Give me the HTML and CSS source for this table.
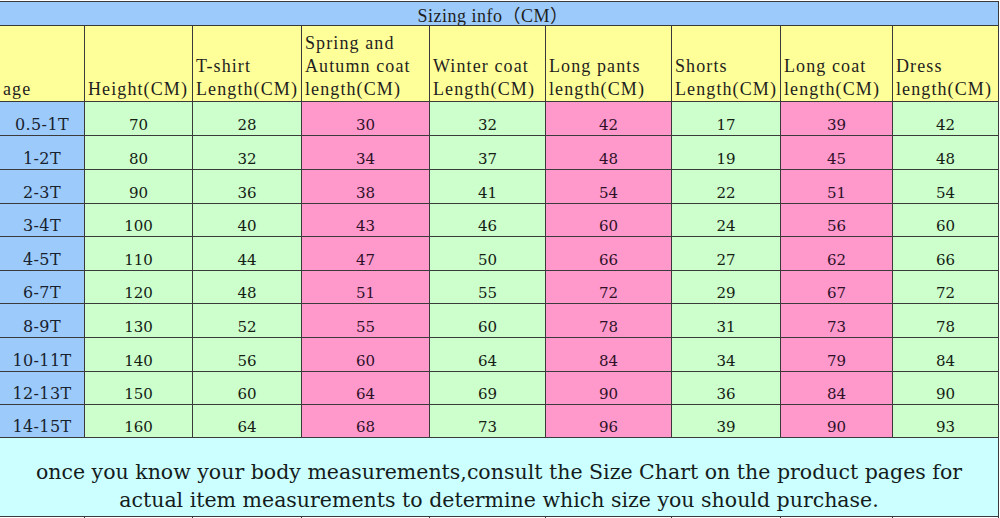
FILE: index.html
```html
<!DOCTYPE html>
<html>
<head>
<meta charset="utf-8">
<link rel="stylesheet" href="styles.css">
</head>
<body>
<div class="chart">
  <div class="title">Sizing info（CM）</div>

  <div class="hd">age</div>
  <div class="hd">Height(CM)</div>
  <div class="hd">T-shirt<br>Length(CM)</div>
  <div class="hd">Spring and<br>Autumn coat<br>length(CM)</div>
  <div class="hd">Winter coat<br>Length(CM)</div>
  <div class="hd">Long pants<br>length(CM)</div>
  <div class="hd">Shorts<br>Length(CM)</div>
  <div class="hd">Long coat<br>length(CM)</div>
  <div class="hd">Dress<br>length(CM)</div>

  <div class="c age">0.5-1T</div><div class="c g">70</div><div class="c g">28</div><div class="c p">30</div><div class="c g">32</div><div class="c p">42</div><div class="c g">17</div><div class="c p">39</div><div class="c g">42</div>
  <div class="c age">1-2T</div><div class="c g">80</div><div class="c g">32</div><div class="c p">34</div><div class="c g">37</div><div class="c p">48</div><div class="c g">19</div><div class="c p">45</div><div class="c g">48</div>
  <div class="c age">2-3T</div><div class="c g">90</div><div class="c g">36</div><div class="c p">38</div><div class="c g">41</div><div class="c p">54</div><div class="c g">22</div><div class="c p">51</div><div class="c g">54</div>
  <div class="c age">3-4T</div><div class="c g">100</div><div class="c g">40</div><div class="c p">43</div><div class="c g">46</div><div class="c p">60</div><div class="c g">24</div><div class="c p">56</div><div class="c g">60</div>
  <div class="c age">4-5T</div><div class="c g">110</div><div class="c g">44</div><div class="c p">47</div><div class="c g">50</div><div class="c p">66</div><div class="c g">27</div><div class="c p">62</div><div class="c g">66</div>
  <div class="c age">6-7T</div><div class="c g">120</div><div class="c g">48</div><div class="c p">51</div><div class="c g">55</div><div class="c p">72</div><div class="c g">29</div><div class="c p">67</div><div class="c g">72</div>
  <div class="c age">8-9T</div><div class="c g">130</div><div class="c g">52</div><div class="c p">55</div><div class="c g">60</div><div class="c p">78</div><div class="c g">31</div><div class="c p">73</div><div class="c g">78</div>
  <div class="c age">10-11T</div><div class="c g">140</div><div class="c g">56</div><div class="c p">60</div><div class="c g">64</div><div class="c p">84</div><div class="c g">34</div><div class="c p">79</div><div class="c g">84</div>
  <div class="c age">12-13T</div><div class="c g">150</div><div class="c g">60</div><div class="c p">64</div><div class="c g">69</div><div class="c p">90</div><div class="c g">36</div><div class="c p">84</div><div class="c g">90</div>
  <div class="c age">14-15T</div><div class="c g">160</div><div class="c g">64</div><div class="c p">68</div><div class="c g">73</div><div class="c p">96</div><div class="c g">39</div><div class="c p">90</div><div class="c g">93</div>

  <div class="note">once you know your body measurements,consult the Size Chart on the product pages for<br>actual item measurements to determine which size you should purchase.</div>

  <div class="e"></div><div class="e"></div><div class="e"></div><div class="e"></div><div class="e"></div><div class="e"></div><div class="e"></div><div class="e"></div><div class="e"></div>
</div>
</body>
</html>
```

FILE: styles.css
```css
html, body {
  margin: 0;
  padding: 0;
  background: #ffffff;
}
body {
  padding-top: 1px;
  overflow: hidden;
}
.chart {
  width: 998px;
  display: grid;
  grid-template-columns: 84px 107px 108px 127px 115px 125px 108px 111px 105px;
  grid-template-rows: 23px 75px 33px 33px 33px 32px 33px 32px 33px 33px 32px 32px 78px 20px;
  gap: 1px;
  padding: 1px 1px 1px 0;
  background: #3a3a3a;
  color: #1e1e1e;
}
.title {
  grid-column: 1 / -1;
  background: #9ccafa;
  font-family: "Liberation Serif", "Noto Sans CJK SC", serif;
  font-size: 18px;
  letter-spacing: 0.5px;
  display: flex;
  align-items: center;
  justify-content: center;
  padding-right: 12px;
  padding-top: 1px;
}
.hd {
  background: #ffff99;
  font-family: "Liberation Serif", serif;
  font-size: 18px;
  letter-spacing: 1.1px;
  line-height: 23px;
  display: flex;
  align-items: flex-end;
  padding: 0 0 0 3px;
  white-space: nowrap;
}
.c {
  font-family: "DejaVu Serif", serif;
  font-size: 15px;
  display: flex;
  align-items: flex-end;
  justify-content: center;
  padding-bottom: 1px;
  box-sizing: border-box;
}
.age {
  background: #9ccafa;
  color: #18222f;
  font-size: 16px;
  letter-spacing: 0.4px;
}
.g { background: #ccffcc; color: #142014; }
.p { background: #ff99cc; color: #2e1028; }
.note {
  grid-column: 1 / -1;
  background: #ccffff;
  font-family: "DejaVu Serif", serif;
  font-size: 20.5px;
  line-height: 28px;
  text-align: center;
  padding-top: 20px;
  box-sizing: border-box;
  color: #141c1c;
}
.e { background: #ffffff; }
```
